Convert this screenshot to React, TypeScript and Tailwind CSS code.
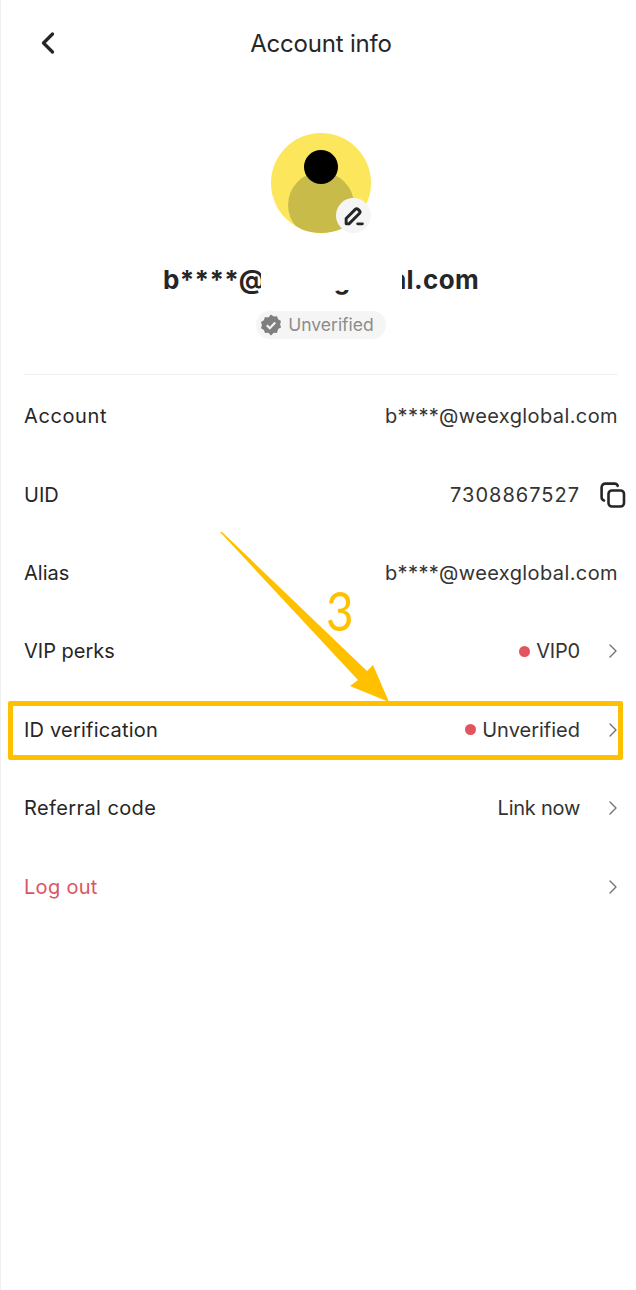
import { ChevronLeft, ChevronRight } from "lucide-react";

type Row = {
  label: string;
  labelClass?: string;
  value?: string;
  valueClass?: string;
  dot?: boolean;
  chevron?: boolean;
  copy?: boolean;
  danger?: boolean;
};

const rows: Row[] = [
  { label: "Account", labelClass: "tracking-[0.6px]", value: "b****@weexglobal.com", valueClass: "tracking-[0.4px]" },
  { label: "UID", value: "7308867527", valueClass: "tracking-[1px]", copy: true },
  { label: "Alias", value: "b****@weexglobal.com", valueClass: "tracking-[0.4px]" },
  { label: "VIP perks", value: "VIP0", valueClass: "tracking-[-0.2px]", dot: true, chevron: true },
  { label: "ID verification", labelClass: "tracking-[0.2px]", value: "Unverified", dot: true, chevron: true },
  { label: "Referral code", labelClass: "tracking-[0.4px]", value: "Link now", valueClass: "tracking-[-0.25px]", chevron: true },
  { label: "Log out", labelClass: "tracking-[0.3px]", chevron: true, danger: true },
];

function CopyIcon() {
  return (
    <svg width="28" height="28" viewBox="0 0 28 28" fill="none" stroke="#262626" strokeWidth="2.6" strokeLinecap="round" className="shrink-0">
      <rect x="9.5" y="9.5" width="15.5" height="16" rx="3.5" />
      <path d="M5 19.5C3.6 19 2.600 17.800 2.600 16.200V6.400C2.600 4.200 4.200 2.600 6.400 2.600H15.500C17 2.600 18.200 3.400 18.700 4.800" />
    </svg>
  );
}

export default function App() {
  return (
    <div className="relative w-[636px] h-[1290px] bg-white overflow-hidden font-['Inter','Liberation_Sans',sans-serif] text-[#262626]">
      <main className="w-[641px] h-[1290px] border-l border-[#f0f0f0]">
        <header className="relative h-[88px] flex items-center justify-center">
          <ChevronLeft className="absolute left-[29px] top-[24px] w-[36px] h-[38px]" strokeWidth={2.2} color="#262626" />
          <h1 className="text-[24px] font-normal tracking-[-0.2px]">Account info</h1>
        </header>

        <section className="flex flex-col items-center pt-[45px]">
          <div className="relative w-[100px] h-[100px] rounded-full bg-[#fce65c] overflow-hidden">
            <div className="absolute left-[17px] top-[39px] w-[66px] h-[66px] rounded-full bg-[#c9bb4a]" />
            <div className="absolute left-[33px] top-[17px] w-[34px] h-[34px] rounded-full bg-black" />
          </div>
          <div className="relative w-[100px] h-0">
            <div className="absolute left-[65px] top-[-35px] w-[35px] h-[35px] rounded-full bg-[#f5f5f5] flex items-center justify-center">
              <svg width="22" height="22" viewBox="0 0 21 21" fill="none" stroke="#262626" strokeWidth="2.8" strokeLinejoin="round" strokeLinecap="round">
                <path d="M3 15.500V18H5.700L15.600 8.100C16.400 7.300 16.400 6.200 15.600 5.400L14.400 4.200C13.600 3.400 12.500 3.400 11.700 4.200L3 12.900Z" />
                <path d="M14 18H18.500" />
              </svg>
            </div>
          </div>
          <div className="relative mt-[31px] h-[32px] flex items-center">
            <span className="text-[26px] font-bold leading-[32px] tracking-[0.35px]">b****@weexglobal.com</span>
            <div className="absolute left-[98px] top-0 w-[141px] h-[26px] bg-white" />
          </div>
          <div className="mt-[15px] h-[28px] pl-[3px] pr-[12px] flex items-center gap-[5px] rounded-full bg-[#f5f5f5] text-[#8c8c8c] text-[17.5px]">
            <svg width="24" height="24" viewBox="0 0 24 24">
              <path fill="#7f7f7f" d="M12 1.500l2.700 2 3.300-.3 1.100 3.100 2.900 1.700-.9 3.200.9 3.200-2.900 1.700L18 20.100l-3.300-.3-2.700 2.700-2.700-2.700-3.300.3-1.100-3.100L2 15.300l.9-3.200L2 8.900 4.900 7.200 6 4.100l3.300.3z" />
              <path d="M7.800 12.200l3 3 5.400-5.600" fill="none" stroke="#f5f5f5" strokeWidth="2.200" />
            </svg>
            <span>Unverified</span>
          </div>
        </section>

        <div className="mx-[23px] mt-[35px] border-t border-[#f0f0f0]" />

        <ul className="mx-[23px] pt-[2px]">
          {rows.map((r) => (
            <li key={r.label} className="h-[78.4px] flex items-center justify-between text-[20px]">
              <span className={`${r.danger ? "text-[#dc5460]" : "text-[#262626]"} ${r.labelClass ?? ""}`}>{r.label}</span>
              <span className="flex items-center text-[#333333]">
                {r.dot && <span className="w-[11px] h-[11px] rounded-full bg-[#e0555f] mr-[6px]" />}
                {r.value && <span className={r.valueClass}>{r.value}</span>}
                {r.copy && (
                  <span className="ml-[19px] mr-[-9px]">
                    <CopyIcon />
                  </span>
                )}
                {r.chevron && <ChevronRight className="ml-[21px] mr-[-7px] w-[24px] h-[26px]" strokeWidth={1.4} color="#737373" />}
              </span>
            </li>
          ))}
        </ul>
      </main>

      <div className="absolute left-[8px] top-[701px] w-[615px] h-[59px] border-[5px] border-[#ffc000] rounded-[2px]" />
      <svg className="absolute left-0 top-0 pointer-events-none" width="636" height="760" viewBox="0 0 636 760">
        <polygon fill="#ffc000" points="220,532 222,532 367,671 373,665 389,702 350,686 358,680" />
      </svg>
      <span className="absolute left-[324px] top-[578px] text-[54px] leading-[66px] font-normal scale-x-[0.88] text-[#ffc000] font-['Lato',sans-serif]">3</span>
    </div>
  );
}
